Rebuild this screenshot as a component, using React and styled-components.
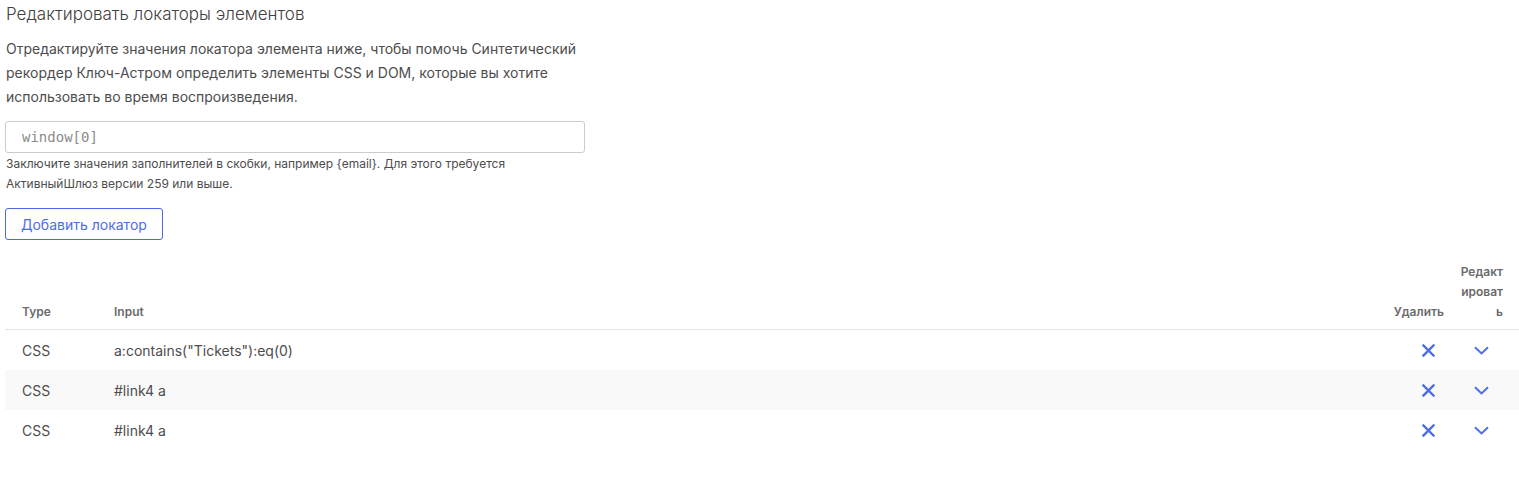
import styled, { createGlobalStyle } from "styled-components";

const GlobalStyle = createGlobalStyle`
  body {
    margin: 0;
    font-family: Inter, "Noto Sans", sans-serif;
    color: #454646;
    background: #ffffff;
  }
`;

const locators = [
  { type: "CSS", input: 'a:contains("Tickets"):eq(0)' },
  { type: "CSS", input: "#link4 a" },
  { type: "CSS", input: "#link4 a" },
];

function CloseIcon() {
  return (
    <svg width="13" height="13" viewBox="0 0 13 13" fill="none">
      <path d="M1.5 1.5l10 10M11.5 1.5l-10 10" stroke="currentColor" strokeWidth="2.4" strokeLinecap="square" />
    </svg>
  );
}

function ChevronIcon() {
  return (
    <svg width="15" height="9" viewBox="0 0 15 9" fill="none">
      <path d="M1 1.2l6.5 6.3L14 1.2" stroke="currentColor" strokeWidth="1.9" />
    </svg>
  );
}

export default function App() {
  return (
    <>
      <GlobalStyle />
      <Page>
        <Intro>
          <Title>Редактировать локаторы элементов</Title>
          <Description>
            Отредактируйте значения локатора элемента ниже, чтобы помочь Синтетический
            рекордер Ключ-Астром определить элементы CSS и DOM, которые вы хотите
            использовать во время воспроизведения.
          </Description>
          <LocatorInput placeholder="window[0]" />
          <Hint>
            Заключите значения заполнителей в скобки, например {"{email}"}. Для этого требуется
            АктивныйШлюз версии 259 или выше.
          </Hint>
          <AddButton>Добавить локатор</AddButton>
        </Intro>

        <Table>
          <HeadRow>
            <HeadCell>Type</HeadCell>
            <HeadCell>Input</HeadCell>
            <HeadCell $align="right">Удалить</HeadCell>
            <HeadCell $align="right" $narrow>Редактировать</HeadCell>
          </HeadRow>
          {locators.map((row, i) => (
            <Row key={i} $striped={i % 2 === 1}>
              <Cell>{row.type}</Cell>
              <Cell>{row.input}</Cell>
              <ActionCell $justify="flex-end">
                <IconButton aria-label="Удалить">
                  <CloseIcon />
                </IconButton>
              </ActionCell>
              <ActionCell $justify="center" $narrow>
                <IconButton aria-label="Редактировать">
                  <ChevronIcon />
                </IconButton>
              </ActionCell>
            </Row>
          ))}
        </Table>
      </Page>
    </>
  );
}

const Page = styled.div`
  padding: 0 0 0 5px;
`;

const Intro = styled.div`
  width: 580px;
`;

const Title = styled.h2`
  margin: 0;
  font-size: 17px;
  font-weight: 300;
  line-height: 28px;
  padding-left: 1px;
  color: #3f4040;
`;

const Description = styled.p`
  margin: 9px 0 0;
  font-size: 14px;
  line-height: 24px;
  padding-left: 1px;
  color: #4d4d4d;
`;

const LocatorInput = styled.input`
  display: block;
  box-sizing: border-box;
  width: 580px;
  height: 32px;
  margin-top: 12px;
  padding: 0 16px;
  border: 1px solid #cccccc;
  border-radius: 3px;
  font-family: "DejaVu Sans Mono", monospace;
  font-size: 14px;
  color: #454646;
  outline: none;
  &::placeholder {
    color: #8c8c8c;
  }
`;

const Hint = styled.p`
  margin: 1px 0 0;
  font-size: 12px;
  line-height: 20px;
  padding-left: 1px;
  color: #4d4d4d;
`;

const AddButton = styled.button`
  box-sizing: border-box;
  height: 32px;
  margin-top: 14px;
  padding: 0 15px;
  background: #ffffff;
  border: 1px solid #4c6de6;
  border-radius: 3px;
  font-family: Inter, sans-serif;
  font-size: 14px;
  color: #4c6de6;
  cursor: pointer;
`;

const Table = styled.div`
  margin-top: 22px;
`;

const gridCols = `
  display: grid;
  grid-template-columns: 92px 1fr 80px 67px;
`;

const HeadRow = styled.div`
  ${gridCols}
  align-items: end;
  border-bottom: 1px solid #e4e4e4;
`;

const HeadCell = styled.div`
  padding: ${(p) => (p.$narrow ? "0 16px 7px 8px" : p.$align === "right" ? "0 8px 7px 0" : "0 16px 7px 17px")};
  font-size: 12px;
  font-weight: 600;
  line-height: 20px;
  color: #6b6b6b;
  text-align: ${(p) => p.$align || "left"};
  word-break: ${(p) => (p.$narrow ? "break-all" : "normal")};
`;

const Row = styled.div`
  ${gridCols}
  height: 40px;
  align-items: center;
  background: ${(p) => (p.$striped ? "#f9f9f9" : "transparent")};
`;

const Cell = styled.div`
  padding: 0 16px 0 17px;
  font-size: 14px;
  color: #4d4d4d;
  white-space: nowrap;
`;

const ActionCell = styled.div`
  display: flex;
  justify-content: ${(p) => p.$justify};
  padding: ${(p) => (p.$narrow ? "0 16px 0 8px" : "0 8px 0 0")};
`;

const IconButton = styled.button`
  display: flex;
  align-items: center;
  justify-content: center;
  width: 32px;
  height: 32px;
  padding: 0;
  border: none;
  background: transparent;
  color: #4c6de6;
  cursor: pointer;
`;
